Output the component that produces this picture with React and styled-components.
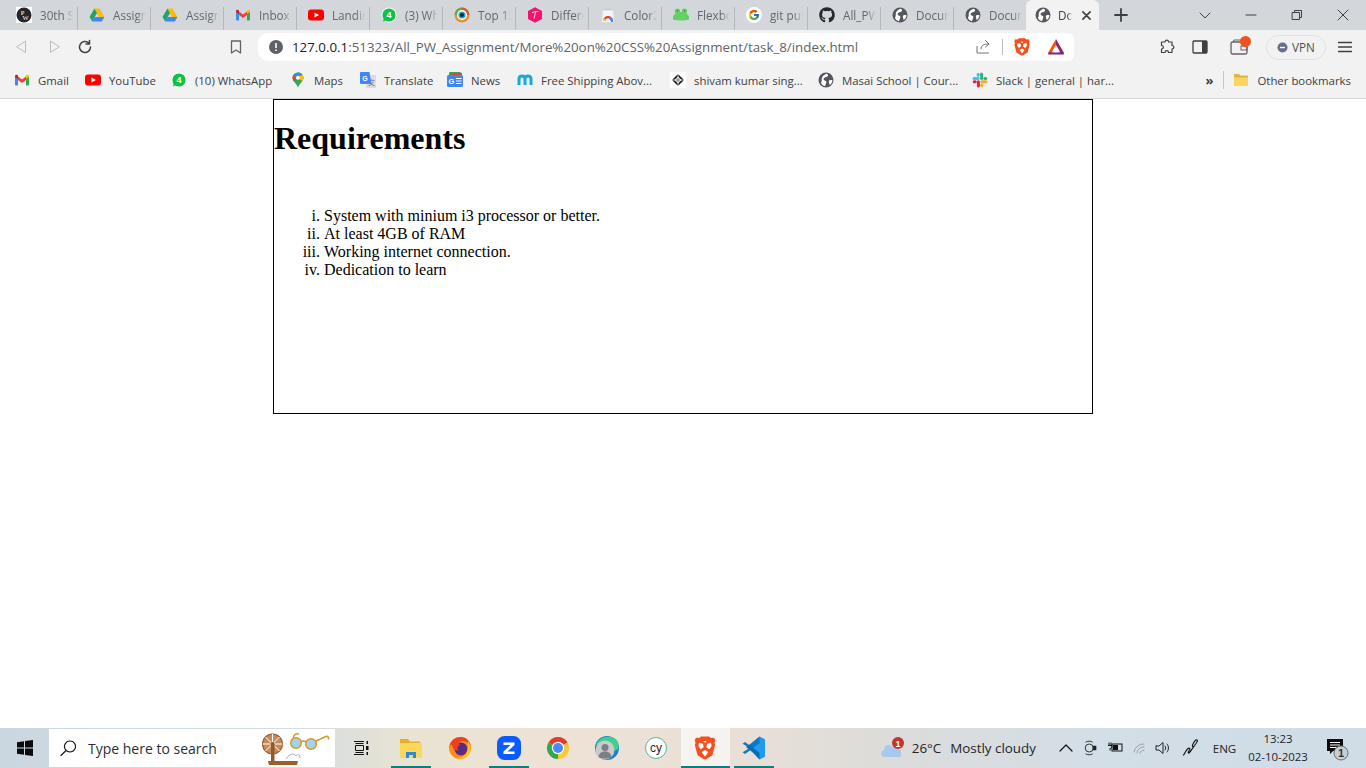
import React from 'react';
import styled, { createGlobalStyle } from 'styled-components';
import { FaGithub } from 'react-icons/fa';
import { FcGoogle } from 'react-icons/fc';

const Global = createGlobalStyle`
  html, body { margin: 0; padding: 0; background: #fff; overflow: hidden; }
  body { font-family: "Open Sans", "Noto Sans", sans-serif; }
`;

const Screen = styled.div`display:flex;flex-direction:column;width:1366px;height:768px;`;
const TabStrip = styled.div`display:flex;align-items:stretch;height:30px;background:#d3d7db;padding-left:4px;flex:none;`;
const Tab = styled.div`
  position:relative;display:flex;align-items:center;width:73px;padding-left:${p => (p.$active ? '9px' : '12px')};box-sizing:border-box;flex:none;
  background:${p => (p.$active ? '#f2f2f2' : 'transparent')};
  border-radius:${p => (p.$active ? '6px 6px 0 0' : '0')};
  &::after{content:"";position:absolute;right:-1px;top:7px;bottom:0;width:1px;background:${p => (p.$plain ? 'transparent' : '#b4b8bc')};}
`;
const TabIcon = styled.span`display:flex;width:16px;height:16px;flex:none;`;
const TabTitle = styled.span`
  margin-left:${p => (p.$active ? '7px' : '8px')};margin-bottom:1px;width:${p => (p.$active ? '14px' : '33px')};overflow:hidden;white-space:nowrap;font-size:11.7px;line-height:16px;
  color:${p => (p.$active ? '#3c4043' : '#63676b')};
  -webkit-mask-image:linear-gradient(90deg,#000 72%,transparent);mask-image:linear-gradient(90deg,#000 72%,transparent);
`;
const TabClose = styled.span`display:flex;margin-left:10px;`;
const NewTab = styled.span`display:flex;align-items:center;justify-content:center;width:44px;`;
const WindowControls = styled.div`display:flex;margin-left:auto;`;
const WinBtn = styled.span`display:flex;align-items:center;justify-content:center;width:46px;`;

const Toolbar = styled.div`display:flex;align-items:center;height:34px;background:#f2f2f2;flex:none;`;
const NavBtn = styled.span`display:flex;align-items:center;justify-content:center;width:${p => p.$w}px;padding-left:${p => p.$pl || 0}px;box-sizing:border-box;flex:none;`;
const Omnibox = styled.div`display:flex;align-items:center;width:816px;height:28px;background:#fff;border-radius:10px 6px 6px 10px;flex:none;box-sizing:border-box;`;
const Url = styled.span`flex:1;font-size:13.33px;color:#5f6368;white-space:nowrap;`;
const UrlHost = styled.span`color:#202124;`;
const OmniSep = styled.span`width:1px;height:16px;background:#b9bcbf;flex:none;`;
const VpnPill = styled.div`display:flex;align-items:center;gap:4px;justify-content:center;width:60px;height:25px;border:1px solid #dfe1e3;border-radius:13px;font-size:11.7px;color:#4b4f53;box-sizing:border-box;flex:none;`;

const Bookmarks = styled.div`display:flex;align-items:center;height:32px;background:#f2f2f2;border-bottom:1px solid #d5d6d7;padding:0 0 2px 14px;flex:none;`;
const Bookmark = styled.div`display:flex;align-items:center;gap:8px;width:${p => p.$w}px;flex:none;font-size:11.4px;color:#3c4043;white-space:nowrap;`;
const BookmarkSep = styled.span`width:1px;height:18px;background:#c4c6c8;margin:0 9px 0 10px;flex:none;`;
const Chevrons = styled.span`font-size:13px;font-weight:700;color:#3c4043;margin-left:auto;`;
const BookmarkEnd = styled.div`display:flex;align-items:center;gap:8px;font-size:11.4px;color:#3c4043;white-space:nowrap;padding-right:15px;`;

const Page = styled.main`flex:1;background:#fff;font-family:"Liberation Serif","Times New Roman",serif;color:#000;`;
const Box = styled.section`width:820px;height:315px;box-sizing:border-box;margin:0 auto;border:1px solid #000;`;
const Title = styled.h1`font-size:32px;font-weight:700;margin:20px 0 50px;line-height:37px;`;
const List = styled.ol`list-style:lower-roman;margin:0;padding-left:50px;font-size:16px;line-height:18px;`;

const Taskbar = styled.footer`display:flex;align-items:stretch;height:40px;flex:none;background:linear-gradient(90deg,#cbd7e0 0%,#d5dde0 22%,#e9e3d3 30%,#eee2d6 42%,#e9dfd7 55%,#dcdcda 65%,#d3dee6 80%,#d0dde6 100%);`;
const StartBtn = styled.span`display:flex;align-items:center;justify-content:center;width:49px;flex:none;`;
const SearchBox = styled.div`position:relative;display:flex;align-items:center;width:286px;margin:1px 0;background:#fff;flex:none;padding-left:11px;box-sizing:border-box;`;
const SearchText = styled.span`font-size:14px;color:#2b2f33;margin-left:12px;`;
const Doodle = styled.span`position:absolute;right:5px;top:1px;display:flex;`;
const AppBtn = styled.span`
  position:relative;display:flex;align-items:center;justify-content:center;width:${p => p.$w || 49}px;flex:none;
  background:${p => (p.$focus ? 'rgba(255,255,255,.6)' : 'transparent')};
  &::after{content:"";position:absolute;bottom:0;height:2px;left:${p => (p.$focus ? '0' : '4.5px')};right:${p => (p.$focus ? '0' : '4.5px')};background:${p => (p.$on ? '#04827f' : 'transparent')};}
`;
const AppRow = styled.div`display:flex;`;
const Tray = styled.div`display:flex;align-items:center;margin-left:auto;padding-right:15px;`;
const Weather = styled.div`display:flex;align-items:center;font-size:13.4px;color:#1f2429;margin-right:12px;white-space:nowrap;`;
const WeatherIcon = styled.span`display:flex;margin-right:7px;`;
const WeatherCond = styled.span`margin-left:9px;`;
const TrayIcon = styled.span`display:flex;align-items:center;justify-content:center;width:${p => p.$w}px;flex:none;`;
const Lang = styled.span`font-size:11.6px;color:#1f2429;width:37px;text-align:center;flex:none;`;
const Clock = styled.div`display:flex;flex-direction:column;align-items:center;width:70px;margin-right:10px;font-size:11.4px;line-height:18px;color:#1f2429;flex:none;`;

const S = ({ s = 16, v = 16, children }) => <svg width={s} height={s} viewBox={`0 0 ${v} ${v}`} style={{ display: 'block', flex: 'none' }}>{children}</svg>;

const Globe = () => <S><circle cx="8" cy="8" r="7.5" fill="#54585c"/><path d="M8.500 1.800c1.800.6 2 1.700 1 2.700-1.200 1-3 .7-3.800 1.900-.6 1.100.5 1.800 1.800 2.300 1.200.6 1 2 .3 3.200-.4.800-.7 1.500-.8 2.300C4.500 13.500 3 12 3 10.500c1.300-1.200.4-2.700.8-4.300.5-2 2.500-3.700 4.700-4.400ZM11.500 8.300c1.200-.4 2.300-.2 3 .2-.2 1.800-1.200 3.500-2.800 4.500-.4-.9-.4-1.800-.7-2.500-.3-.8-.2-1.700.5-2.200Z" fill="#fff"/></S>;
const PW = () => <S><rect width="16" height="16" fill="#fff"/><circle cx="8" cy="8" r="7.5" fill="#23272b"/><text x="6.500" y="8" fontSize="6.500" fill="#fff" textAnchor="middle" fontFamily="Liberation Serif">P</text><text x="9.500" y="13" fontSize="6.500" fill="#fff" textAnchor="middle" fontFamily="Liberation Serif">W</text></S>;
const Drive = () => <S><path d="M5.400 1.500h5.200L15.400 10h-5.200Z" fill="#fbbc04"/><path d="M5.400 1.500.6 10l2.600 4.500L8 6Z" fill="#1fa463"/><path d="M3.200 14.500h9.600l2.600-4.500H5.800Z" fill="#4285f4"/></S>;
const Gmail = () => <S><path d="M1 13.500V4l3 2v7.500H2a1 1 0 0 1-1-1Z" fill="#4285f4"/><path d="M15 13.500V4l-3 2v7.500h2a1 1 0 0 0 1-1Z" fill="#34a853"/><path d="M4 8V4.500L8 7.600l4-3.100V8L8 11Z" fill="#ea4335"/><path d="M1 4.200C1 2.800 2.400 2.200 3.400 3L4 3.500V7L1 5Z" fill="#c5221f"/><path d="M15 4.200c0-1.400-1.400-2-2.400-1.200l-.6.500V7l3-2Z" fill="#fbbc04"/></S>;
const YT = () => <S><rect y="2.500" width="16" height="11" rx="3" fill="#f00"/><path d="M6.500 5.500 11 8l-4.500 2.500Z" fill="#fff"/></S>;
const WA = () => <S><circle cx="8" cy="8" r="7.500" fill="#fff"/><circle cx="8" cy="8" r="6.600" fill="#0fc145"/><path d="M2 14.500 3 10.500 5.500 13Z" fill="#0fc145"/><text x="8" y="11.200" fontSize="9" fontWeight="700" fill="#fff" textAnchor="middle" fontFamily="Liberation Sans">4</text></S>;
const Top12 = () => <S><circle cx="8" cy="8" r="7.500" fill="#e8912d"/><path d="M8 .5a7.500 7.500 0 0 1 7.500 7.500H8Z" fill="#d9543a"/><path d="M.5 8A7.500 7.500 0 0 1 8 .5V8Z" fill="#5cae4a"/><circle cx="8" cy="8" r="5" fill="#fff"/><circle cx="8" cy="8" r="3.600" fill="#2aa3c4"/><circle cx="8" cy="8" r="2" fill="#1c2530"/></S>;
const Hex = () => <S><path d="M8 .3 15 4v8l-7 3.800L1 12V4Z" fill="#f0146e"/><path d="M5 5.500c2-.8 4-1 6.500-1M8.500 5 7 11.500" stroke="#fff" strokeWidth=".8" fill="none"/></S>;
const Chrome = ({ s = 16, inner = 5 }) => <S s={s} v={24}><path d="M12 12 2.470 6.500a11 11 0 0 1 19.060 0Z" fill="#e33b2e"/><path d="M12 12 2.470 6.500A11 11 0 0 0 12 23Z" fill="#2fa84f"/><path d="M12 12l9.530-5.500A11 11 0 0 1 12 23Z" fill="#fcc934"/><circle cx="12" cy="12" r={inner + 1.200} fill="#fff"/><circle cx="12" cy="12" r={inner} fill="#4a8af4"/></S>;
const Color2 = () => <S><path d="M4.500 3.500h7V1.500h-7Z" fill="#c9cbce"/><path d="M3 3.500h10l1 11.500H2Z" fill="#f4f5f6"/><path d="M3 14a5 5 0 0 1 10 0h-2.200a2.800 2.800 0 0 0-5.600 0Z" fill="#e33b2e"/><path d="M3 14a5 5 0 0 1 .9-2.900L5.600 12.500l-.4 1.500Z" fill="#fcc934"/><path d="M9.500 9.200A5 5 0 0 1 13 14h-2.200L9 11.500Z" fill="#4a8af4"/><path d="M11 14h2l-.3 1H11Z" fill="#2fa84f"/></S>;
const Frog = () => <S><circle cx="4.500" cy="4" r="2.600" fill="#5fcf5f"/><circle cx="11.500" cy="4" r="2.600" fill="#5fcf5f"/><rect x="1.500" y="5" width="13" height="8.500" rx="3.500" fill="#63d263"/><rect x="0" y="8" width="3" height="5" rx="1.500" fill="#5fcf5f"/><rect x="13" y="8" width="3" height="5" rx="1.500" fill="#5fcf5f"/><circle cx="4.500" cy="3.800" r=".8" fill="#2e8f2e"/><circle cx="11.500" cy="3.800" r=".8" fill="#2e8f2e"/></S>;
const GoogleG = () => <S><circle cx="8" cy="8" r="8" fill="#fff"/><svg x="2" y="2" width="12" height="12" viewBox="0 0 48 48"><FcGoogle size={48}/></svg></S>;
const Github = () => <FaGithub size={16} color="#24292e"/>;
const Maps = () => <S><path d="M8 .5c3 0 5.500 2.200 5.500 5.300 0 3.600-4 5.800-5.500 9.700-1.500-3.900-5.500-6.100-5.500-9.700C2.500 2.700 5 .5 8 .5Z" fill="#34a853"/><path d="M3.400 3.300 8 .5c1.800 0 3.400.8 4.400 2L3.400 9Z" fill="#4285f4"/><path d="M3.400 3 2.500 5.800c0 1.300.5 2.400 1.200 3.400l3-3Z" fill="#ea4335"/><path d="M12.400 2.500C13.100 3.400 13.500 4.500 13.500 5.800c0 1.300-.6 2.500-1.300 3.500L8 5.500Z" fill="#fbbc04"/><circle cx="8" cy="5.700" r="2" fill="#fff"/></S>;
const Translate = () => <S><rect x="6" y="3" width="10" height="13" fill="#dadce0"/><text x="11.500" y="13" fontSize="7" fill="#70757a" textAnchor="middle" fontFamily="Noto Sans CJK SC">文</text><path d="M1 0h8.500l2 12H1a1 1 0 0 1-1-1V1a1 1 0 0 1 1-1Z" fill="#4285f4"/><text x="5" y="8.500" fontSize="7" fontWeight="700" fill="#fff" textAnchor="middle" fontFamily="Liberation Sans">G</text></S>;
const News = () => <S><rect x="2" y="0" width="12" height="5" rx="1" fill="#34a853"/><rect x="4" y="1" width="11" height="4" fill="#ea4335"/><rect x="0" y="3" width="16" height="12" rx="1.500" fill="#4285f4"/><text x="4.500" y="11.500" fontSize="7.500" fontWeight="700" fill="#fff" textAnchor="middle" fontFamily="Liberation Sans">G</text><path d="M9 6.500h5.500M9 9h5.500M9 11.500h5.500" stroke="#fff" strokeWidth="1.100"/></S>;
const MLogo = () => <S><path d="M2 13V7c0-2 1.200-3 3-3s3 1 3 3v6M8 7c0-2 1.200-3 3-3s3 1 3 3v6" stroke="#1aa7e0" strokeWidth="3" fill="none"/></S>;
const Diamond = () => <S><rect width="16" height="16" fill="#fff"/><path d="M8 2 14 8 8 14 2 8Z" fill="#1c1f22"/><path d="M8 4.500 11.500 8 8 11.500 4.500 8Z" fill="#fff"/><circle cx="8" cy="8" r="1.700" fill="#1c1f22"/><path d="M8 2v12M2 8h12" stroke="#fff" strokeWidth=".7"/></S>;
const Slack = () => <S><path d="M6.200 6.600H2" stroke="#36c5f0" strokeWidth="3" strokeLinecap="round"/><path d="M6.200 2.200v1" stroke="#36c5f0" strokeWidth="3" strokeLinecap="round"/><path d="M9.600 6.400V2" stroke="#2eb67d" strokeWidth="3" strokeLinecap="round"/><path d="M13.800 6.400h-1" stroke="#2eb67d" strokeWidth="3" strokeLinecap="round"/><path d="M9.800 9.800H14" stroke="#ecb22e" strokeWidth="3" strokeLinecap="round"/><path d="M9.800 13.800v-1" stroke="#ecb22e" strokeWidth="3" strokeLinecap="round"/><path d="M6.400 9.800V14" stroke="#e01e5a" strokeWidth="3" strokeLinecap="round"/><path d="M2.200 9.800h1" stroke="#e01e5a" strokeWidth="3" strokeLinecap="round"/></S>;
const Folder = () => <S><path d="M1 3a1 1 0 0 1 1-1h4l1.500 1.500H14a1 1 0 0 1 1 1V13a1 1 0 0 1-1 1H2a1 1 0 0 1-1-1Z" fill="#e3b53f"/><path d="M1 5.500h14V13a1 1 0 0 1-1 1H2a1 1 0 0 1-1-1Z" fill="#fcd462"/></S>;
const BraveShield = ({ s = 18 }) => <S s={s} v={18}><path d="M4.500 1.500 6 .3h6l1.500 1.200 2.300-.2.900 2-.6 1.700.5 1.800-2 7.700L9.700 17.500H8.300L3.400 14.500l-2-7.700.5-1.800-.6-1.700.9-2Z" fill="#f4501e"/><path d="M9 10.500 6.500 12 9 15.500l2.500-3.500ZM4.500 5 7.500 5.800 8 8.500 5.800 10 4 7.500ZM13.500 5l-3 .8L10 8.500l2.200 1.500L14 7.500ZM7.500 3.800h3L9 5Z" fill="#fff"/></S>;
const Bat = () => <S s={18} v={18}><path d="M9 1 1 15h4l4-7Z" fill="#ff5000"/><path d="M9 1l8 14h-4L9 8Z" fill="#9e1f63"/><path d="M5 13.500h8L9 7Z" fill="#fff"/><path d="M1.500 14.500h15L17 16.500H1Z" fill="#662d91"/></S>;

const tabs = [[PW, '30th Sept'], [Drive, 'Assignment'], [Drive, 'Assignment'], [Gmail, 'Inbox (1)'], [YT, 'Landing'], [WA, '(3) WhatsApp'], [Top12, 'Top 12 CSS'], [Hex, 'Different'], [Color2, 'Color2K'], [Frog, 'Flexbox'], [GoogleG, 'git push'], [Github, 'All_PW_A'], [Globe, 'Document'], [Globe, 'Document']];
const marks = [[Gmail, 'Gmail', 71], [YT, 'YouTube', 86], [WA, '(10) WhatsApp', 119], [Maps, 'Maps', 70], [Translate, 'Translate', 87], [News, 'News', 70], [MLogo, 'Free Shipping Abov...', 153], [Diamond, 'shivam kumar sing...', 148], [Globe, 'Masai School | Cour...', 154], [Slack, 'Slack | general | har...', 150]];

const Line = ({ d, c = '#3c4043', w = 1, s = 16, v = 16 }) => <S s={s} v={v}><path d={d} fill="none" stroke={c} strokeWidth={w} strokeLinecap="round" strokeLinejoin="round"/></S>;

const Firefox = () => <S s={24} v={24}><circle cx="12" cy="12" r="11" fill="#ff8a16"/><circle cx="13" cy="13" r="6.500" fill="#5b2a86"/><path d="M1.500 10C3 4 8 1 13 1c5 0 9 4 10 9-2-4-5-5-8-5-4 0-5 3-3 4-3 1-3 4-1 5.500-4 0-7-2-7-6-2 1-3 2-3.500 1.500Z" fill="#e9421c"/><path d="M20 5c3 4 3.500 10 .5 14-3 3.500-8 4.500-12 3 6 0 10-3 11-8 .5-3 .5-6.500.5-9Z" fill="#ffc21a"/></S>;
const ZoomApp = () => <S s={24} v={24}><rect width="24" height="24" rx="7.500" fill="#0b5cff"/><path d="M6.500 6.500h11v2.500L10.500 15.500H17.500V18H6.500v-2.500L13.500 9H6.500Z" fill="#fff"/></S>;
const Edge = () => <S s={24} v={24}><circle cx="12" cy="12" r="12" fill="#1b7fc4"/><path d="M1 9C3 2 12-1 19 2c4 2 6 7 4 11-2 2-6 2-9 0 3-2 1-6-3-6-4 0-8 1-10 2Z" fill="#3fcf8e"/><circle cx="10" cy="14" r="9.500" fill="#c8cacc"/><circle cx="10" cy="11.500" r="3.500" fill="#7d8082"/><path d="M3.500 21c.5-4 3-5.500 6.500-5.500S16 17 16.500 21c-2 2-11 2-13 0Z" fill="#7d8082"/></S>;
const Cypress = () => <S s={22} v={22}><circle cx="11" cy="11" r="10.500" fill="#fff" stroke="#4fb89d" strokeWidth="1"/><text x="11" y="15" fontSize="12" fill="#1b1e2e" textAnchor="middle" fontFamily="Liberation Sans">cy</text></S>;
const VSCode = () => <S s={24} v={24}><path d="M17.500.5 23 3.200v17.600L17.500 23.500 7 13l3-2Z" fill="#1f9cf0"/><path d="M17.500.5V7L6.500 15.500 3 18 .7 16.200 7.500 12 .7 7.800 3 6l4 3Z" fill="#0f78c2"/><path d="M17.500 23.500V17L7 8.500l-3 2.500 8 6Z" fill="#0a6bb0"/></S>;
const Explorer = () => <S s={24} v={24}><path d="M1 3h8l2 2.500h10v3H1Z" fill="#e9ae2e"/><rect x="1" y="7" width="22" height="15" fill="#fbd75c"/><path d="M7 22v-6h10v6h-3v-3h-4v3Z" fill="#2a8ad4"/></S>;
const Wheel = () => <svg width="68" height="37" viewBox="0 0 68 37"><circle cx="10.500" cy="14" r="10" fill="#c98a5a" stroke="#8f5a2e" strokeWidth="1.200"/><path d="M10.500 4v20M.5 14h20M3.500 7l14 14M17.500 7l-14 14" stroke="#fff" strokeWidth="1"/><circle cx="10.500" cy="14" r="2" fill="#8f5a2e"/><rect x="9" y="14" width="3.500" height="18" fill="#8f5a2e"/><path d="M6 31h30l-1 4H7Z" fill="#9c5f2c"/><path d="M24 29c4-6 8-6 10-3 2-3 4-1 4 2" stroke="#a7a7d0" fill="none"/><circle cx="34" cy="13" r="5.300" fill="#9ed4ee" stroke="#d89b2b" strokeWidth="1.600"/><circle cx="49" cy="14" r="5.300" fill="#9ed4ee" stroke="#d89b2b" strokeWidth="1.600"/><path d="M39 11.500c2-1 3-1 5 .5M31 8c1-3 3-5 6-4M54 11 64 6.500c2-.8 3 1 2.500 3" stroke="#d89b2b" strokeWidth="1.600" fill="none"/></svg>;

export default function App() {
  return (
    <Screen>
      <Global/>
      <TabStrip>
        {tabs.map(([I, t], i) => <Tab key={i} $plain={i === 13}><TabIcon><I/></TabIcon><TabTitle>{t}</TabTitle></Tab>)}
        <Tab $active $plain><TabIcon><Globe/></TabIcon><TabTitle $active>Document</TabTitle><TabClose><Line s={9} v={10} w={1.800} d="M1 1l8 8M9 1 1 9"/></TabClose></Tab>
        <NewTab><Line s={14} v={14} w={1.800} d="M7 1v12M1 7h12"/></NewTab>
        <WindowControls>
          <WinBtn><Line s={12} v={12} d="M1 4l5 5 5-5"/></WinBtn>
          <WinBtn><Line s={12} v={12} d="M1 6h10"/></WinBtn>
          <WinBtn><Line s={12} v={12} d="M1.500 3.500h7v7h-7ZM3.500 3.500v-2h7v7h-2"/></WinBtn>
          <WinBtn><Line s={12} v={12} d="M1 1l10 10M11 1 1 11"/></WinBtn>
        </WindowControls>
      </TabStrip>

      <Toolbar>
        <NavBtn $w={43}><Line c="#b8babc" d="M11.500 2.500v11L3 8Z"/></NavBtn>
        <NavBtn $w={22}><Line c="#b8babc" d="M4.500 2.500v11L13 8Z"/></NavBtn>
        <NavBtn $w={40}><Line w={1.500} d="M13.500 8A5.500 5.500 0 1 1 11.800 4M12.500 1.500V5H9"/></NavBtn>
        <NavBtn $w={115}/>
        <NavBtn $w={32}><Line w={1.300} d="M3.500 2h9v12L8 11l-4.500 3Z" c="#5f6368"/></NavBtn>
        <NavBtn $w={6}/>
        <Omnibox>
          <NavBtn $w={34} $pl={2}><S s={14} v={14}><circle cx="7" cy="7" r="7" fill="#5f6368"/><path d="M7 3v5M7 9.500v1.500" stroke="#fff" strokeWidth="1.600"/></S></NavBtn>
          <Url><UrlHost>127.0.0.1</UrlHost>:51323/All_PW_Assignment/More%20on%20CSS%20Assignment/task_8/index.html</Url>
          <NavBtn $w={38}><Line c="#6f7276" d="M2 7.500V14h11.500M6 10c0-4 3-5 7-5M10.500 1.500 14 5l-3.500 3"/></NavBtn>
          <OmniSep/>
          <NavBtn $w={38}><BraveShield/></NavBtn>
          <NavBtn $w={30}><Bat/></NavBtn>
          <NavBtn $w={3}/>
        </Omnibox>
        <NavBtn $w={76}/>
        <NavBtn $w={33}><Line w={1.200} d="M6 3c0-2.500 3.500-2.500 3.500 0H13v3.500c2.500 0 2.500 3.500 0 3.500v3.500H9.500c0-2.500-3.500-2.500-3.500 0H2.500v-3.500c2.500 0 2.500-3.500 0-3.500V3Z"/></NavBtn>
        <NavBtn $w={33}><S><rect x="1" y="2" width="14" height="12" rx="1" fill="none" stroke="#3c4043" strokeWidth="1.300"/><rect x="10" y="2" width="5" height="12" fill="#3c4043"/></S></NavBtn>
        <NavBtn $w={50}>
          <S s={22} v={22}><rect x="1" y="6" width="16" height="12" rx="1.500" fill="none" stroke="#5f6368" strokeWidth="1.300"/><path d="M3 6l1-2h10" stroke="#5f6368" fill="none"/><rect x="11" y="10" width="6" height="4" fill="none" stroke="#5f6368"/><circle cx="15.500" cy="5.500" r="5.500" fill="#f4501e"/></S>
        </NavBtn>
        <VpnPill><S s={11} v={11}><circle cx="5.500" cy="5.500" r="5" fill="#676d8c"/><path d="M3 5.500h5" stroke="#fff" strokeWidth="1.400"/></S>VPN</VpnPill>
        <NavBtn $w={38}><Line w={1.300} s={14} v={14} d="M0.500 2.500h13M0.500 7h13M0.500 11.500h13"/></NavBtn>
      </Toolbar>

      <Bookmarks>
        {marks.map(([I, t, w], i) => <Bookmark key={i} $w={w}><I/>{t}</Bookmark>)}
        <Chevrons>»</Chevrons>
        <BookmarkSep/>
        <BookmarkEnd><Folder/>Other bookmarks</BookmarkEnd>
      </Bookmarks>

      <Page>
        <Box>
          <Title>Requirements</Title>
          <List>
            <li>System with minium i3 processor or better.</li>
            <li>At least 4GB of RAM</li>
            <li>Working internet connection.</li>
            <li>Dedication to learn</li>
          </List>
        </Box>
      </Page>

      <Taskbar>
        <StartBtn><S><path d="M0 2.200 7 1.200V7.500H0ZM8 1 16 0V7.500H8ZM0 8.500H7V14.800L0 13.800ZM8 8.500H16V16L8 15Z" fill="#0c0c0c"/></S></StartBtn>
        <SearchBox>
          <Line c="#1a1a1a" w={1.200} s={16} v={16} d="M6 10.500 1 15.500M10 1a5.500 5.500 0 1 0 .001 0Z"/>
          <SearchText>Type here to search</SearchText>
          <Doodle><Wheel/></Doodle>
        </SearchBox>
        <AppRow>
          <AppBtn $w={51.5}><S><path d="M2.500 3.500h8M2.500 12.500h8M2.500 5.500h8v5h-8ZM1 1.500h10M1 14.500h10" fill="none" stroke="#111" strokeWidth="1"/><rect x="13.500" y="1" width="1.500" height="3" fill="#111"/><rect x="13" y="6" width="2.500" height="4" fill="#111"/><rect x="13.500" y="12" width="1.500" height="3" fill="#111"/></S></AppBtn>
          <AppBtn $on><Explorer/></AppBtn>
          <AppBtn><Firefox/></AppBtn>
          <AppBtn $on><ZoomApp/></AppBtn>
          <AppBtn><Chrome s={24}/></AppBtn>
          <AppBtn><Edge/></AppBtn>
          <AppBtn><Cypress/></AppBtn>
          <AppBtn $on $focus><BraveShield s={24}/></AppBtn>
          <AppBtn $on><VSCode/></AppBtn>
        </AppRow>
        <Tray>
          <Weather>
            <WeatherIcon>
              <S s={25} v={25}><path d="M5 21c-5 0-5-6-1-7 0-5 7-7 9-2 5-1 9 2 8 6 1 2 0 3-2 3Z" fill="#a9c8ee"/><circle cx="18" cy="7" r="6" fill="#c4342c"/><text x="18" y="10.500" fontSize="9" fontWeight="700" fill="#fff" textAnchor="middle" fontFamily="Liberation Sans">1</text></S>
            </WeatherIcon>
            26°C<WeatherCond>Mostly cloudy</WeatherCond>
          </Weather>
          <TrayIcon $w={36}><Line w={1.200} c="#111" s={14} v={14} d="M1 10l6-6 6 6"/></TrayIcon>
          <TrayIcon $w={14}><S s={16} v={18}><circle cx="7" cy="9" r="4.500" fill="none" stroke="#222"/><rect x="11" y="6.500" width="4" height="5" fill="#222"/><path d="M3 2.500c2-1.500 6-1.500 8 0M3 15.500c2 1.500 6 1.500 8 0" stroke="#222" fill="none"/></S></TrayIcon>
          <TrayIcon $w={34}><S><rect x="5" y="4" width="10" height="7" fill="none" stroke="#111"/><rect x="6" y="5" width="5" height="5" fill="#111"/><path d="M2 2.500v3M4 2.500v3M1 5.500h4c0 2-1 3-2 3v2" stroke="#111" fill="none"/></S></TrayIcon>
          <TrayIcon $w={16}><Line c="#9da3a8" w={1} d="M2 12a9 9 0 0 1 10-8M5 13a6 6 0 0 1 7-6M8 13.500a3 3 0 0 1 4-3"/></TrayIcon>
          <TrayIcon $w={28}><Line c="#222" w={1} d="M2 6v4h3l4 3.500v-11L5 6ZM11 6c1 1 1 3 0 4M13 4c2 2 2 6 0 8"/></TrayIcon>
          <TrayIcon $w={30}><Line c="#111" w={1.100} s={18} v={18} d="M1.500 16c1-1 2-4 4-6 1.500-1.500 3-1 2 1-1 1.500-2 3.500-.5 3 2-2 5-7 7-9.500 1-1.500 2-3 1-3.500-1-.5-3 2-4 4s-1 3 1 2.500"/></TrayIcon>
          <Lang>ENG</Lang>
          <Clock><span>13:23</span><span>02-10-2023</span></Clock>
          <TrayIcon $w={28}>
            <S s={26} v={26}><path d="M3 4h16v12H9l-3 3v-3H3Z" fill="#0c0c0c"/><path d="M6 7.500h10M6 10h10M6 12.500h7" stroke="#fff" strokeWidth="1"/><circle cx="17" cy="18" r="7" fill="#c7cfd5" stroke="#6b6f73" strokeWidth="1"/><text x="17" y="22" fontSize="11" fontWeight="700" fill="#333" textAnchor="middle" fontFamily="Liberation Sans">1</text></S>
          </TrayIcon>
        </Tray>
      </Taskbar>
    </Screen>
  );
}
